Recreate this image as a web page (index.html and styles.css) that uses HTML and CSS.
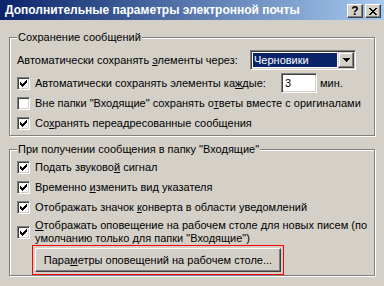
FILE: index.html
```html
<!DOCTYPE html>
<html lang="ru">
<head>
    <meta charset="UTF-8">
    <title>Дополнительные параметры электронной почты</title>
    <link rel="stylesheet" href="styles.css">
</head>
<body>
<div class="dialog">
    <div class="titlebar">
        <span class="title">Дополнительные параметры электронной почты</span>
        <div class="caption-buttons">
            <button class="cap-btn">?</button>
            <button class="cap-btn">
                <svg width="8" height="7" viewBox="0 0 8 7"><path d="M0 0h2v1h-2z M6 0h2v1h-2z M1 1h2v1h-2z M5 1h2v1h-2z M2 2h4v1h-4z M3 3h2v1h-2z M2 4h4v1h-4z M1 5h2v1h-2z M5 5h2v1h-2z M0 6h2v1h-2z M6 6h2v1h-2z" fill="#000"/></svg>
            </button>
        </div>
    </div>

    <div class="content">
        <fieldset class="group group-save">
            <legend>Сохранение сообщений</legend>
            <div class="row">
                <span class="label-combo">Автоматически сохранять <u>э</u>лементы через:</span>
                <div class="combo">
                    <span class="combo-value">Черновики</span>
                    <span class="combo-btn">
                        <svg width="7" height="4" viewBox="0 0 7 4"><path d="M0 0h7v1h-1v1h-1v1h-1v1h-1v-1h-1v-1h-1v-1h-1z" fill="#000"/></svg>
                    </span>
                </div>
            </div>
            <div class="row row-every">
                <span class="check on"></span>
                <span class="label-every">Автоматически сохранять элементы ка<u>ж</u>дые:</span>
                <span class="num">3</span>
                <span class="unit">мин.</span>
            </div>
            <div class="row">
                <span class="check"></span>
                <span>Вне папки "Входящие" сохранять о<u>т</u>веты вместе с оригиналами</span>
            </div>
            <div class="row">
                <span class="check on"></span>
                <span>Со<u>х</u>ранять переадресованные сообщения</span>
            </div>
        </fieldset>

        <fieldset class="group group-inbox">
            <legend>При получении сообщения в папку "Входящие"</legend>
            <div class="row">
                <span class="check on"></span>
                <span>Подать звуково<u>й</u> сигнал</span>
            </div>
            <div class="row">
                <span class="check on"></span>
                <span>Временно <u>и</u>зменить вид указателя</span>
            </div>
            <div class="row">
                <span class="check on"></span>
                <span>Отображать значок <u>к</u>онверта в области уведомлений</span>
            </div>
            <div class="row row-tall">
                <span class="check on"></span>
                <span><u>О</u>тображать оповещение на рабочем столе для новых писем (по<br>умолчанию только для папки "Входящие")</span>
            </div>
            <button class="notify-btn">Пара<u>м</u>етры оповещений на рабочем столе...</button>
        </fieldset>
    </div>
</div>
</body>
</html>
```

FILE: styles.css
```css
* {
    box-sizing: border-box;
}

body {
    margin: 0;
    background: #d4d0c8;
    font-family: "Liberation Sans", Arial, sans-serif;
    font-size: 11px;
    color: #000;
}

.dialog {
    width: 384px;
    height: 286px;
    overflow: hidden;
}

/* title bar */
.titlebar {
    height: 20px;
    display: flex;
    align-items: flex-start;
    padding: 0 3px 0 5px;
    background: linear-gradient(to right, #0a246a, #a6caf0);
}
.title {
    flex: 1;
    color: #fff;
    font-weight: bold;
    font-size: 12px;
    line-height: 20px;
    white-space: nowrap;
}
.caption-buttons {
    display: flex;
    gap: 2px;
    margin-top: 4px;
}
.cap-btn {
    width: 16px;
    height: 14px;
    padding: 0;
    display: flex;
    align-items: center;
    justify-content: center;
    background: #d4d0c8;
    border: 1px solid;
    border-color: #fff #404040 #404040 #fff;
    box-shadow: inset -1px -1px #808080, inset 1px 1px #d4d0c8;
    font: bold 12px "Liberation Sans", Arial, sans-serif;
    color: #000;
}

/* group boxes */
.content {
    padding: 11px 0 0 9px;
}
.group {
    width: 366px;
    margin: 0;
    padding: 6px 6px 2px 7px;
    border: 1px solid #808080;
    box-shadow: inset 1px 1px #fff, 1px 1px #fff;
    min-width: 0;
}
.group legend {
    padding: 0 1px;
    line-height: 13px;
    background: #d4d0c8;
}
.group-inbox {
    margin-top: 7px;
    padding-top: 1px;
    padding-bottom: 3px;
}

.row {
    display: flex;
    align-items: center;
    height: 20px;
    white-space: nowrap;
}
.row-every {
    margin-top: 3px;
}
.row-tall {
    height: auto;
    line-height: 13px;
    margin-top: 2px;
}

.check {
    position: relative;
    width: 13px;
    height: 13px;
    margin-right: 5px;
    flex-shrink: 0;
    background: #fff;
    border: 1px solid;
    border-color: #808080 #fff #fff #808080;
    box-shadow: inset 1px 1px #404040, inset -1px -1px #d4d0c8;
}
.check.on::after {
    content: "";
    position: absolute;
    left: 2px;
    top: 2px;
    width: 7px;
    height: 7px;
    background: url("data:image/svg+xml,%3Csvg xmlns='http://www.w3.org/2000/svg' width='7' height='7'%3E%3Cpath d='M0 2h1v3h-1z M1 3h1v3h-1z M2 4h1v3h-1z M3 3h1v3h-1z M4 2h1v3h-1z M5 1h1v3h-1z M6 0h1v3h-1z' fill='%23000'/%3E%3C/svg%3E") no-repeat;
}

/* combo and number field */
.label-combo {
    width: 233px;
}
.combo {
    width: 106px;
    height: 20px;
    display: flex;
    padding: 1px;
    background: #fff;
    border: 1px solid;
    border-color: #808080 #fff #fff #808080;
    box-shadow: inset 1px 1px #404040, inset -1px -1px #d4d0c8;
}
.combo-value {
    flex: 1;
    margin: 1px;
    padding-left: 1px;
    background: #0a246a;
    color: #fff;
    line-height: 14px;
}
.combo-btn {
    width: 16px;
    height: 16px;
    display: flex;
    align-items: center;
    justify-content: center;
    background: #d4d0c8;
    border: 1px solid;
    border-color: #d4d0c8 #404040 #404040 #d4d0c8;
    box-shadow: inset -1px -1px #808080, inset 1px 1px #fff;
}

.label-every {
    width: 246px;
}
.num {
    width: 36px;
    height: 20px;
    padding-left: 3px;
    line-height: 18px;
    background: #fff;
    border: 1px solid;
    border-color: #808080 #fff #fff #808080;
    box-shadow: inset 1px 1px #404040, inset -1px -1px #d4d0c8;
}
.unit {
    margin-left: 3px;
}

/* push button */
.notify-btn {
    display: block;
    width: 246px;
    height: 24px;
    margin: 3px 0 0 18px;
    padding: 0;
    background: #d4d0c8;
    border: 1px solid;
    border-color: #fff #404040 #404040 #fff;
    box-shadow: inset -1px -1px #808080, inset 1px 1px #d4d0c8;
    outline: 1px solid #f00;
    outline-offset: 2px;
    font: inherit;
    color: #000;
}
```
